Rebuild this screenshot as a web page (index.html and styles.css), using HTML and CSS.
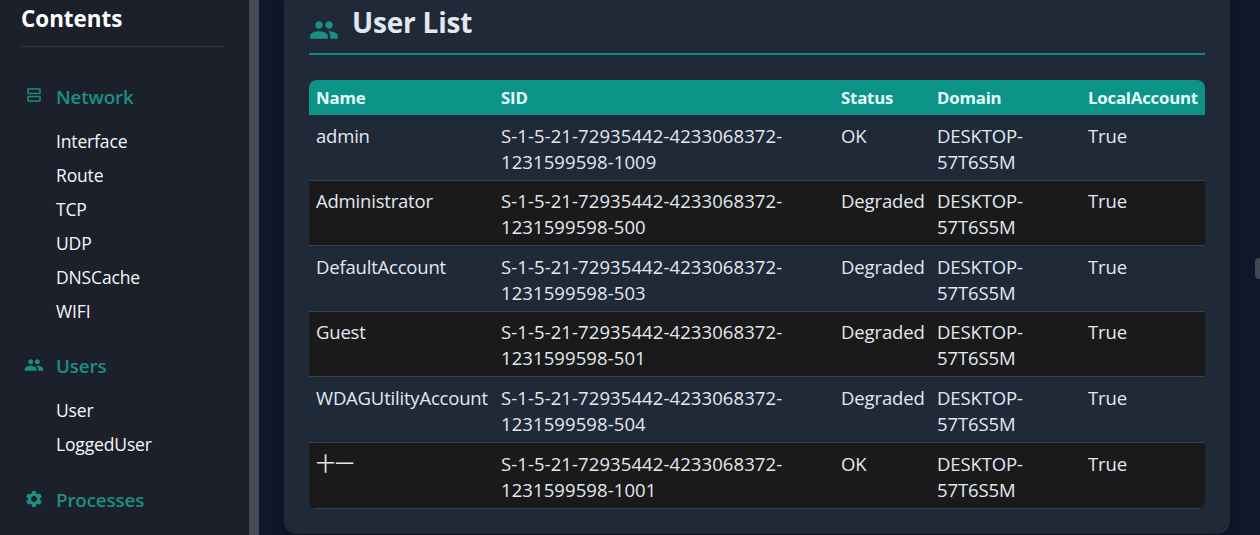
FILE: index.html
```html
<!DOCTYPE html>
<html lang="en">
<head>
  <meta charset="UTF-8" />
  <meta name="viewport" content="width=device-width, initial-scale=1.0" />
  <title>User List</title>
  <link rel="stylesheet" href="styles.css">
</head>
<body>
  <svg class="symbols">
    <symbol id="people" viewBox="0 0 24 24">
      <path d="M16 11c1.66 0 2.99-1.34 2.99-3S17.66 5 16 5s-3 1.34-3 3 1.34 3 3 3zm-8 0c1.66 0 2.99-1.34 2.99-3S9.66 5 8 5 5 6.34 5 8s1.34 3 3 3zm0 2c-2.33 0-7 1.17-7 3.5V19h14v-2.500C15 14.170 10.330 13 8 13zm8 0c-.29 0-.62.02-.97.05 1.160.84 1.970 1.970 1.970 3.450V19h6v-2.500c0-2.330-4.670-3.500-7-3.500z"/>
    </symbol>
    <symbol id="gear" viewBox="0 0 24 24">
      <path d="M19.140 12.940c.04-.3.06-.61.06-.94 0-.32-.02-.64-.07-.94l2.030-1.580c.18-.14.23-.41.12-.61l-1.920-3.320c-.12-.22-.37-.29-.59-.22l-2.390.96c-.5-.38-1.030-.7-1.620-.94l-.36-2.540c-.04-.24-.24-.41-.48-.41h-3.840c-.24 0-.43.17-.47.41l-.36 2.540c-.59.24-1.130.57-1.620.94l-2.390-.96c-.22-.08-.47 0-.59.22L2.740 8.870c-.12.21-.08.47.12.61l2.030 1.580c-.05.3-.09.63-.09.94s.02.64.07.94l-2.030 1.580c-.18.14-.23.41-.12.61l1.920 3.320c.12.22.37.29.59.22l2.390-.96c.5.38 1.030.7 1.620.94l.36 2.540c.05.24.24.41.48.41h3.840c.24 0 .44-.17.47-.41l.36-2.540c.59-.24 1.130-.56 1.620-.94l2.390.96c.22.08.47 0 .59-.22l1.920-3.320c.12-.22.07-.47-.12-.61l-2.010-1.580zM12 15.600c-1.980 0-3.600-1.620-3.600-3.600s1.620-3.600 3.600-3.600 3.600 1.620 3.600 3.600-1.620 3.600-3.600 3.600z"/>
    </symbol>
    <symbol id="dns" viewBox="0 0 24 24">
      <path d="M19 15v4H5v-4h14m1-2H4c-.55 0-1 .45-1 1v6c0 .55.45 1 1 1h16c.55 0 1-.45 1-1v-6c0-.55-.45-1-1-1zM19 5v4H5V5h14m1-2H4c-.55 0-1 .45-1 1v6c0 .55.45 1 1 1h16c.55 0 1-.45 1-1V4c0-.55-.45-1-1-1z"/>
    </symbol>
  </svg>
  <div class="layout">
    <nav class="sidebar">
      <h2>Contents</h2>
      <div class="group">
        <h3><svg class="dns"><use href="#dns"/></svg>Network</h3>
        <ul>
          <li>Interface</li>
          <li>Route</li>
          <li>TCP</li>
          <li>UDP</li>
          <li>DNSCache</li>
          <li>WIFI</li>
        </ul>
      </div>
      <div class="group">
        <h3><svg><use href="#people"/></svg>Users</h3>
        <ul>
          <li>User</li>
          <li>LoggedUser</li>
        </ul>
      </div>
      <div class="group">
        <h3><svg><use href="#gear"/></svg>Processes</h3>
      </div>
    </nav>
    <main>
      <section class="card">
        <h1><svg><use href="#people"/></svg><span>User List</span></h1>
        <table>
          <colgroup>
            <col class="c-name"><col class="c-sid"><col class="c-status"><col class="c-domain"><col>
          </colgroup>
          <thead>
            <tr><th>Name</th><th>SID</th><th>Status</th><th>Domain</th><th>LocalAccount</th></tr>
          </thead>
          <tbody>
            <tr><td>admin</td><td>S-1-5-21-72935442-4233068372-<br>1231599598-1009</td><td>OK</td><td>DESKTOP-<br>57T6S5M</td><td>True</td></tr>
            <tr><td>Administrator</td><td>S-1-5-21-72935442-4233068372-<br>1231599598-500</td><td>Degraded</td><td>DESKTOP-<br>57T6S5M</td><td>True</td></tr>
            <tr><td>DefaultAccount</td><td>S-1-5-21-72935442-4233068372-<br>1231599598-503</td><td>Degraded</td><td>DESKTOP-<br>57T6S5M</td><td>True</td></tr>
            <tr><td>Guest</td><td>S-1-5-21-72935442-4233068372-<br>1231599598-501</td><td>Degraded</td><td>DESKTOP-<br>57T6S5M</td><td>True</td></tr>
            <tr><td>WDAGUtilityAccount</td><td>S-1-5-21-72935442-4233068372-<br>1231599598-504</td><td>Degraded</td><td>DESKTOP-<br>57T6S5M</td><td>True</td></tr>
            <tr><td class="cjk">十一</td><td>S-1-5-21-72935442-4233068372-<br>1231599598-1001</td><td>OK</td><td>DESKTOP-<br>57T6S5M</td><td>True</td></tr>
          </tbody>
        </table>
      </section>
      <div class="thumb"></div>
    </main>
  </div>
</body>
</html>
```
FILE: styles.css
```css
:root {
  --bg: #0f172a;
  --card: #1f2937;
  --side: #1c202b;
  --accent: #0d9488;
  --line: #374151;
}
* {
  box-sizing: border-box;
}
body {
  margin: 0;
  background: var(--bg);
  color: #e2e8f0;
  font-family: "Open Sans", "Noto Sans CJK SC", sans-serif;
  font-size: 18.5px;
  line-height: 26px;
}
.symbols {
  display: none;
}
svg {
  fill: currentColor;
}
.layout {
  display: flex;
  height: 535px;
  overflow: hidden;
}
.sidebar {
  width: 259px;
  flex: none;
  padding: 3px 25px 0 21px;
  background: var(--side);
  border-right: 10px solid #484b55;
  color: #f5f7fa;
}
.sidebar h2 {
  margin: 0 0 33px;
  height: 44px;
  font-size: 22.4px;
  line-height: 32px;
  border-bottom: 1px solid #2e3541;
  color: #fff;
}
.group {
  margin-bottom: 21px;
}
.group h3 {
  display: flex;
  margin: 0;
  height: 34px;
  line-height: 34px;
  font-size: 18.8px;
  font-weight: 600;
  letter-spacing: -0.15px;
  color: #1a8f83;
}
.group h3 svg {
  width: 20px;
  height: 20px;
  margin: 6px 12px 0 3px;
}
.group h3 .dns {
  width: 18px;
  height: 18px;
  margin: 6px 13px 0 4px;
}
.group ul {
  list-style: none;
  margin: 0;
  padding: 10px 0 0 35px;
}
.group li {
  height: 34px;
  line-height: 34px;
  font-size: 17.5px;
  letter-spacing: -0.15px;
}
.group:last-child h3 {
  line-height: 36px;
}
.group:last-child svg {
  margin-top: 7px;
}
main {
  flex: 1;
  display: flex;
  padding-left: 25px;
}
.card {
  width: 946px;
  height: 534px;
  padding: 0 25px;
  background: var(--card);
  border-radius: 0 0 12px 12px;
  box-shadow: 0 2px 8px rgba(0, 0, 0, 0.35);
}
h1 {
  display: flex;
  margin: 0 0 25px;
  height: 55px;
  font-size: 28px;
  line-height: 45px;
  letter-spacing: -0.2px;
  border-bottom: 2px solid #17877f;
}
h1 svg {
  width: 30px;
  height: 30px;
  margin: 15px 13px 0 0;
  color: #1a8f83;
}
table {
  width: 896px;
  table-layout: fixed;
  border-collapse: separate;
  border-spacing: 0;
  border-radius: 8px;
  overflow: hidden;
}
.c-name {
  width: 185px;
}
.c-sid {
  width: 340px;
}
.c-status {
  width: 96px;
}
.c-domain {
  width: 151px;
}
th {
  height: 35px;
  padding: 1px 0 0 7px;
  background: var(--accent);
  color: #e6fffa;
  text-align: left;
  font-size: 16.8px;
  letter-spacing: -0.2px;
}
td {
  height: 65.6px;
  padding: 7.6px 0 0 7px;
  vertical-align: top;
  white-space: nowrap;
  letter-spacing: -0.12px;
  border-bottom: 1px solid var(--line);
}
td:first-child {
  letter-spacing: -0.2px;
}
td:nth-child(2) {
  letter-spacing: 0.09px;
}
td.cjk {
  font-size: 19px;
  letter-spacing: 0;
}
tbody tr:nth-child(even) {
  background: #1a1a1a;
}
.thumb {
  width: 5px;
  height: 21px;
  margin: 258px 0 0 auto;
  background: #424753;
  border-radius: 4px 0 0 4px;
}
```
